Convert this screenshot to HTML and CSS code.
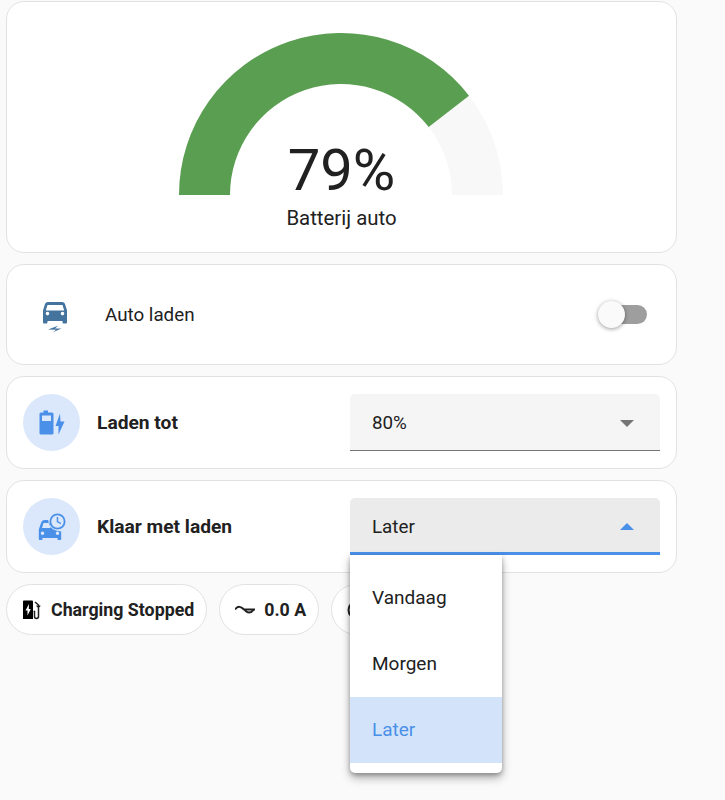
FILE: index.html
```html
<!DOCTYPE html>
<html lang="nl">
<head>
    <meta charset="UTF-8">
    <meta name="viewport" content="width=device-width, initial-scale=1.0">
    <title>Auto laden</title>
    <link rel="stylesheet" href="styles.css">
</head>
<body>

    <div class="page">
        <div class="card gauge-card">
            <svg class="gauge" width="326" height="164" viewBox="0 0 326 164">
                <path class="gauge-rest" d="M1 163A162 162 0 0 1 325 163H274A111 111 0 0 0 52 163Z"/>
                <path class="gauge-fill" d="M1 163A162 162 0 0 1 291 63.700L250.700 95A111 111 0 0 0 52 163Z"/>
            </svg>
            <div class="gauge-value">79%</div>
            <div class="gauge-name">Batterij auto</div>
        </div>

        <div class="card switch-card">
            <svg class="car-icon" width="28" height="32" viewBox="0 0 28 32">
                <path fill-rule="evenodd" d="M7 1H21C22.500 1 23.500 1.800 24 3L26 9.500V21C26 22 25.500 22.500 24.500 22.500H23C22.200 22.500 21.500 22 21.500 21V20H6.500V21C6.500 22 5.800 22.500 5 22.500H3.500C2.500 22.500 2 22 2 21V9.500L4 3C4.500 1.800 5.500 1 7 1ZM6.500 4L4.800 9.500H23.200L21.500 4ZM6.500 10.800A1.800 1.800 0 1 0 6.500 14.400A1.800 1.800 0 1 0 6.500 10.800ZM21.500 10.800A1.800 1.800 0 1 0 21.500 14.400A1.800 1.800 0 1 0 21.500 10.800Z"/>
                <path d="M7 28.500L17 24.800L14 27.500H20.500L12 31.300L15 28.800Z"/>
            </svg>
            <div class="switch-label">Auto laden</div>
            <div class="switch">
                <div class="switch-knob"></div>
            </div>
        </div>

        <div class="card select-card">
            <div class="round-icon">
                <svg width="27" height="26" viewBox="0 0 27 26">
                    <path fill-rule="evenodd" d="M5.500 0.500H10V2.500H13.500C14.500 2.500 15.500 3 15.500 4V23C15.500 24 14.500 24.500 13.500 24.500H3.500C2.500 24.500 1.500 24 1.500 23V4C1.500 3 2.500 2.500 3.500 2.500H5.500ZM4 5.500V11H13V5.500Z"/>
                    <path d="M22 3.500L17.500 16H20.500V24.500L26.500 11.500H22.500Z"/>
                </svg>
            </div>
            <div class="select-label">Laden tot</div>
            <div class="select">
                <span>80%</span>
                <div class="arrow-down"></div>
            </div>
        </div>

        <div class="card select-card">
            <div class="round-icon">
                <svg width="28" height="28" viewBox="0 0 28 28">
                    <path fill-rule="evenodd" d="M6.500 7H10.300C10.300 12.500 14.500 18 21 18L23.200 18.500V26C23.200 26.700 22.700 27 22.200 27H20.500C20 27 19.500 26.700 19.500 26V25H4.500V26C4.500 26.700 4 27 3.500 27H1.800C1.300 27 0.800 26.700 0.800 26V16.500L3 10C3.500 8 5 7 6.500 7ZM5.500 10L4 15H12.500L11.500 10ZM4.500 18.500A1.700 1.700 0 1 0 4.500 22A1.700 1.700 0 1 0 4.500 18.500ZM19.500 18.500A1.700 1.700 0 1 0 19.500 22A1.700 1.700 0 1 0 19.500 18.500Z"/>
                    <path fill-rule="evenodd" d="M19.500 0.500A8 8 0 1 1 19.500 16.500A8 8 0 1 1 19.500 0.500ZM19.500 2.300A6.200 6.200 0 1 0 19.500 14.700A6.200 6.200 0 1 0 19.500 2.300ZM18.700 4H20.200V8.200L23.200 10L22.500 11.200L18.700 9Z"/>
                </svg>
            </div>
            <div class="select-label">Klaar met laden</div>
            <div class="select select-open">
                <span>Later</span>
                <div class="arrow-up"></div>
                <div class="menu">
                    <div class="menu-item">Vandaag</div>
                    <div class="menu-item">Morgen</div>
                    <div class="menu-item menu-item-active">Later</div>
                </div>
            </div>
        </div>

        <div class="chips">
            <div class="chip">
                <svg width="20" height="20" viewBox="0 0 20 20">
                    <path fill-rule="evenodd" d="M1 1.500C1 1 1.500 0.500 2 0.500H10C10.500 0.500 11 1 11 1.500V19H1ZM7 4L3.500 10.500H5.500V15.500L8.800 9H6.800Z"/>
                    <path class="chip-line" d="M13 2L16.500 5V16.500C16.500 19 12.500 19 12.500 16.500V11.500H11.500M15 5.500A1.300 1.300 0 1 0 17.800 5.500"/>
                </svg>
                <span>Charging Stopped</span>
            </div>
            <div class="chip">
                <svg width="20" height="20" viewBox="0 0 20 20">
                    <path class="chip-wave" d="M0 9.500C3 5.500 6 6.500 9 9.500H20M9.500 9.500C12 13.500 16 13.500 19 9.500"/>
                </svg>
                <span>0.0 A</span>
            </div>
            <div class="chip chip-hidden">
                <svg width="20" height="20" viewBox="0 0 20 20">
                    <circle class="chip-wave" cx="10" cy="10" r="8.500"/>
                </svg>
            </div>
        </div>
    </div>

</body>
</html>
```

FILE: styles.css
```css
body {
    margin: 0;
    background: #fafafa;
    color: #212121;
    font-family: Roboto, "Liberation Sans", sans-serif;
    font-size: 18.800px;
}

.page {
    width: 671px;
    min-height: 799px;
    padding: 1px 0 0 6px;
    display: flex;
    flex-direction: column;
    gap: 11px;
}

.card {
    background: white;
    border: 1.500px solid #e2e2e2;
    border-radius: 18px;
    box-sizing: border-box;
}

.gauge-card {
    height: 252px;
    padding-top: 30px;
    display: flex;
    flex-direction: column;
    align-items: center;
}

.gauge {
    display: block;
    flex: none;
    margin-left: -1px;
}

.gauge-rest {
    fill: #f8f8f8;
}

.gauge-fill {
    fill: #5a9f51;
}

.gauge-value {
    margin-top: -56px;
    font-size: 58px;
    line-height: 60px;
}

.gauge-name {
    margin-top: 6px;
    font-size: 20.400px;
    line-height: 24px;
}

.switch-card {
    height: 101px;
    padding: 0 29px 0 34px;
    display: flex;
    align-items: center;
}

.car-icon {
    fill: #44739e;
    margin-top: 4px;
}

.switch-label {
    margin-left: 36px;
    flex: 1;
}

.switch {
    position: relative;
    width: 36px;
    height: 19px;
    border-radius: 10px;
    background: #9e9e9e;
}

.switch-knob {
    position: absolute;
    left: -13px;
    top: -4px;
    width: 27px;
    height: 27px;
    border-radius: 50%;
    background: #fafafa;
    box-shadow: 0 1px 4px rgba(0, 0, 0, 0.4);
}

.select-card {
    height: 93px;
    padding: 0 16px;
    display: flex;
    align-items: center;
}

.round-icon {
    width: 57px;
    height: 57px;
    border-radius: 50%;
    background: #dbe8fb;
    display: flex;
    justify-content: center;
    align-items: center;
    flex: none;
}

.round-icon svg {
    fill: #4a90e8;
}

.select-label {
    margin-left: 17px;
    flex: 1;
    font-size: 19.200px;
    font-weight: 700;
    padding-bottom: 1px;
}

.select {
    position: relative;
    width: 310px;
    height: 57px;
    box-sizing: border-box;
    padding: 2px 26px 0 22px;
    background: #f5f5f5;
    border-bottom: 1px solid #757575;
    border-radius: 5px 5px 0 0;
    display: flex;
    justify-content: space-between;
    align-items: center;
}

.select-open {
    background: #ebebeb;
    border-bottom: 3px solid #4a90e8;
    padding-top: 3px;
}

.arrow-down {
    border-left: 7px solid transparent;
    border-right: 7px solid transparent;
    border-top: 7px solid #757575;
}

.arrow-up {
    border-left: 7px solid transparent;
    border-right: 7px solid transparent;
    border-bottom: 7px solid #4a90e8;
}

.menu {
    position: absolute;
    left: 0;
    top: 57px;
    width: 152px;
    padding: 10px 0;
    background: white;
    border-radius: 0 0 5px 5px;
    box-shadow: 0 5px 10px rgba(0, 0, 0, 0.3), 0 2px 4px rgba(0, 0, 0, 0.25);
    z-index: 2;
}

.menu-item {
    height: 66px;
    box-sizing: border-box;
    padding: 0 0 1px 22px;
    display: flex;
    align-items: center;
    font-size: 19px;
}

.menu-item-active {
    background: #d3e4fa;
    color: #4a90e8;
}

.chips {
    display: flex;
    gap: 12px;
}

.chip {
    height: 51px;
    box-sizing: border-box;
    padding: 0 12px 0 15px;
    background: white;
    border: 1.500px solid #e2e2e2;
    border-radius: 26px;
    display: flex;
    align-items: center;
    gap: 9px;
    font-size: 17.800px;
    font-weight: 700;
    white-space: nowrap;
}

.chip-hidden {
    width: 150px;
}

.chip-line,
.chip-wave {
    fill: none;
    stroke: #212121;
    stroke-width: 1.500;
}

.chip-wave {
    stroke-width: 2;
}
```
